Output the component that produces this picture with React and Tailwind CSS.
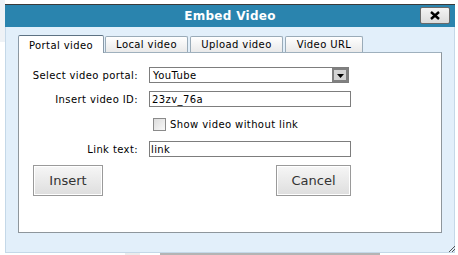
export default function App() {
  const font = { fontFamily: '"DejaVu Sans", Verdana, sans-serif' };
  return (
    <div className="relative w-[458px] h-[255px] bg-white overflow-hidden" style={font}>
      {/* background bits */}
      <div className="absolute left-0 top-0 w-[5px] h-[42px] bg-[#eef2f6]" />
      <div className="absolute left-[160px] top-[252px] w-[220px] h-[3px] bg-[#b4b4b4]" />
      <div className="absolute left-[125px] top-[252px] w-[15px] h-[3px] bg-[#ececec]" />

      <div className="absolute left-[5px] top-[4px] w-[450px] h-[249px] flex flex-col border-b border-[#c4d8e8]">
        {/* title bar */}
        <div className="relative h-[23px] bg-[#2a84ae] border-t border-[#3a3a3a] flex items-center justify-center">
          <span className="text-white font-bold text-[12px] tracking-[0.3px]">Embed Video</span>
          <div className="absolute left-[415px] top-[2px] w-[30px] h-[17px] bg-gradient-to-b from-[#f4f4f4] to-[#dcdcdc] border border-[#6a6a6a] rounded-[2px] flex items-center justify-center">
            <svg width="10" height="9" viewBox="0 0 10 9">
              <path d="M1 1 L9 8 M9 1 L1 8" stroke="#000" strokeWidth="2.4" />
            </svg>
          </div>
        </div>

        {/* body */}
        <div className="flex-1 bg-[#e2effa] border-l border-r border-[#c4d8e8] pl-[12px] pr-[12px] pt-[8px] pb-[19px] flex flex-col">
          {/* tabs */}
          <div className="flex items-end h-[17px] text-[10px] text-black tracking-[0.4px]">
            <div className="relative z-10 w-[86px] h-[18px] -mb-[1px] bg-white border border-[#8a9aa8] border-t-[#5d7283] border-b-0 rounded-t-[2px] flex items-center justify-center pt-[1px]">
              Portal video
            </div>
            <div className="ml-[1px] w-[83px] h-[16px] bg-gradient-to-b from-white to-[#e9e9e9] border border-[#9aabb8] border-b-0 rounded-t-[2px] flex items-center justify-center">
              Local video
            </div>
            <div className="ml-[2px] w-[93px] h-[16px] bg-gradient-to-b from-white to-[#e9e9e9] border border-[#9aabb8] border-b-0 rounded-t-[2px] flex items-center justify-center">
              Upload video
            </div>
            <div className="ml-[2px] w-[78px] h-[16px] bg-gradient-to-b from-white to-[#e9e9e9] border border-[#9aabb8] border-b-0 rounded-t-[2px] flex items-center justify-center">
              Video URL
            </div>
          </div>

          {/* panel */}
          <div className="flex-1 bg-white border border-[#8e969c] border-t-[#9fb0bd] text-[10px] text-black tracking-[0.4px] pt-[14px]">
            <div className="flex items-center h-[16px]">
              <div className="w-[119px] text-right">Select video portal:</div>
              <div className="ml-[11px] w-[200px] h-[16px] border border-[#7d7d7d] flex items-center">
                <span className="pl-[3px] flex-1">YouTube</span>
                <div className="w-[16px] h-[14px] bg-[#d4d4d4] border-[2px] border-[#808080] flex items-end justify-center pb-[2px]">
                  <svg width="7" height="4" viewBox="0 0 7 4">
                    <path d="M0 0 H7 L3.5 4 Z" fill="#000" />
                  </svg>
                </div>
              </div>
            </div>
            <div className="flex items-center h-[16px] mt-[8px]">
              <div className="w-[119px] text-right">Insert video ID:</div>
              <div className="ml-[11px] w-[202px] h-[16px] border border-[#7d7d7d] flex items-center pl-[2px]">23zv_76a</div>
            </div>
            <div className="flex items-center h-[14px] mt-[10px]">
              <div className="ml-[134px] w-[13px] h-[13px] border border-[#8a8a8a] bg-gradient-to-br from-[#dcdcdc] to-[#f8f8f8]" />
              <span className="ml-[4px]">Show video without link</span>
            </div>
            <div className="flex items-center h-[16px] mt-[10px]">
              <div className="w-[119px] text-right">Link text:</div>
              <div className="ml-[11px] w-[202px] h-[16px] border border-[#7d7d7d] flex items-center pl-[1px]">link</div>
            </div>
            <div className="flex items-center mt-[8px] text-[13px] text-[#333] tracking-normal">
              <div className="ml-[14px] w-[70px] h-[31px] border border-[#9a9a9a] bg-gradient-to-b from-[#f6f6f6] to-[#dedede] shadow-[inset_0_0_0_1px_#fff] flex items-center justify-center">Insert</div>
              <div className="ml-[173px] w-[75px] h-[31px] border border-[#9a9a9a] bg-gradient-to-b from-[#f6f6f6] to-[#dedede] shadow-[inset_0_0_0_1px_#fff] flex items-center justify-center">Cancel</div>
            </div>
          </div>
        </div>
      </div>
      {/* resize grip */}
      <svg className="absolute left-[449px] top-[246px]" width="6" height="6" viewBox="0 0 6 6">
        <path d="M0 6 L6 0 M3 6 L6 3" stroke="#555" strokeWidth="1" />
      </svg>
    </div>
  );
}
